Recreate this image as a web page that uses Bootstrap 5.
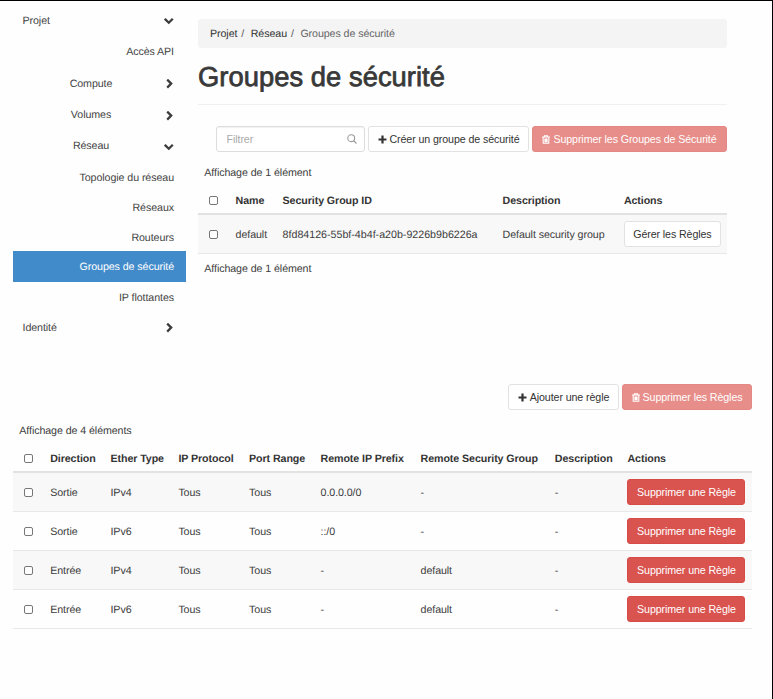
<!DOCTYPE html>
<html lang="fr">
<head>
<meta charset="utf-8">
<title>Groupes de sécurité</title>
<meta name="viewport" content="width=device-width, initial-scale=1">
<link href="https://cdn.jsdelivr.net/npm/bootstrap@5.3.0/dist/css/bootstrap.min.css" rel="stylesheet">
<style>
body{font-family:"Liberation Sans",Arial,sans-serif;font-size:10.67px;line-height:15px;letter-spacing:-.08px;text-rendering:geometricPrecision;color:#3c3c3c;background:#fff;overflow:hidden}
.frame{width:773px;height:699px;border-top:1px solid #000;border-right:1px solid #000;background:#fefefe;white-space:nowrap;overflow:hidden}
.upper{height:383px;padding-left:13px}
.side{width:173px;padding-top:4px}
.side .nav-link{color:#444;height:30px;padding:2px 12px 0 9.5px;font-size:inherit}
.side .tall{height:31.45px;padding-top:1px}
.side .nav-link.active{background:#428bca;color:#fff;height:31px;margin-top:-1px;border-radius:0}
.side .mid{width:100px;margin-left:18.5px;text-align:center}
.chev{width:10px;height:10px;fill:none;stroke:#3c3c3c;stroke-width:2.3}
.main{width:529px;margin-left:12px;padding-top:18px}
.breadcrumb{background:#f4f4f4;height:29px;padding:2px 12px 0;border-radius:3px;font-size:inherit;--bs-breadcrumb-item-padding-x:4px}
.breadcrumb-item a{color:#333}
.breadcrumb-item+.breadcrumb-item::before{color:#555;padding-right:6.5px}
.breadcrumb-item.active{color:#666}
.title{font-size:27.35px;line-height:32px;font-weight:400;letter-spacing:.04px;color:#383838;-webkit-text-stroke:.75px #383838;margin:13px 0 11px}
.rule{height:1px;background:#f0f0f0;margin-bottom:21px}
.btn{--bs-btn-font-size:10.67px;--bs-btn-line-height:15px;--bs-btn-padding-x:0;--bs-btn-padding-y:0;--bs-btn-border-radius:3px;height:26px;display:inline-flex;align-items:center;justify-content:center;gap:3px;letter-spacing:-.1px}
.btn-plain{--bs-btn-bg:#fff;--bs-btn-color:#333;--bs-btn-border-color:#e2e2e2;--bs-btn-hover-bg:#f4f4f4}
.btn-danger{--bs-btn-bg:#d9534f;--bs-btn-border-color:#d74b47;--bs-btn-disabled-bg:#e78e8a;--bs-btn-disabled-border-color:#e58783;--bs-btn-disabled-opacity:1}
.actions{gap:3px}
.filter{width:149.5px}
.filter .form-control{height:26px;font-size:inherit;letter-spacing:inherit;padding:0 10px;border:1px solid #ddd;border-radius:3px;background:#fff;box-shadow:inset 0 1px 1px rgba(0,0,0,.06)}
.filter .form-control::placeholder{color:#aaa}
.filter svg{position:absolute;right:8px;top:8px;z-index:5}
.note{padding-left:6.3px}
.table{--bs-table-color:#3c3c3c;--bs-table-bg:transparent;--bs-table-striped-color:#3c3c3c;--bs-table-striped-bg:#f8f8f8;--bs-table-border-color:#e8e8e8;table-layout:fixed;border-collapse:separate;border-spacing:0;color:#3c3c3c}
.table>:not(caption)>*>*{padding:0 6.2px}
.table>thead>tr>th{height:28px;border-bottom:2px solid #e2e2e2;font-weight:700;color:#333;vertical-align:middle;padding-top:2px}
.table>thead>tr>th:first-child{padding-top:0;padding-bottom:1px}
.table td{height:39px;border-bottom:1px solid #e8e8e8}
.table>tbody>tr>td:not(:first-child):not(:last-child){padding-top:2px}
.table .uuid{letter-spacing:0}
.form-check-input{width:9px;height:9px;border:1px solid #777;margin:1px 0 0 4.4px;border-radius:2px!important;display:block;float:none;background:#fff}
.lower{padding-left:13px;width:752px}
.w1{width:31.4px}
#create{width:161px}
#delgroups{width:195px}
#manage{width:97px}
#addrule{width:111px}
#delrules{width:130px}
.delrule{width:118px}
#n1{margin-top:14px;margin-bottom:6px}
#n2{margin-top:8px}
#n3{margin-top:14px;margin-bottom:6px}
</style>
<script src="https://cdn.jsdelivr.net/npm/bootstrap@5.3.0/dist/js/bootstrap.bundle.min.js"></script>
</head>
<body>
<svg width="0" height="0" class="position-absolute">
<symbol id="down" viewBox="0 0 10 10"><path d="M.8 2.8 4.8 6.7 8.8 2.8"/></symbol>
<symbol id="right" viewBox="0 0 10 10"><path d="M3.2 .6 7.2 4.6 3.2 8.6"/></symbol>
<symbol id="plus" viewBox="0 0 9 9"><path d="M4.5.5v8M.5 4.5h8" stroke="currentColor" stroke-width="2.2"/></symbol>
<symbol id="trash" viewBox="0 0 8 9"><path d="M0 2h8M2.5 1.8V.7h3v1.1M1.2 2v6.3h5.6V2M3 3.6v3.6M4 3.6v3.6M5 3.6v3.6" fill="none" stroke="currentColor" stroke-width="1.1"/></symbol>
</svg>
<div class="frame">
<div class="upper d-flex">
<nav class="side nav flex-column flex-nowrap flex-shrink-0">
<a class="nav-link tall d-flex align-items-center justify-content-between" href="#">Projet<svg class="chev"><use href="#down"/></svg></a>
<a class="nav-link tall d-flex align-items-center justify-content-end" href="#">Accès API</a>
<a class="nav-link tall d-flex align-items-center justify-content-between" href="#"><span class="mid">Compute</span><svg class="chev"><use href="#right"/></svg></a>
<a class="nav-link tall d-flex align-items-center justify-content-between" href="#"><span class="mid">Volumes</span><svg class="chev"><use href="#right"/></svg></a>
<a class="nav-link tall d-flex align-items-center justify-content-between" href="#"><span class="mid">Réseau</span><svg class="chev"><use href="#down"/></svg></a>
<a class="nav-link d-flex align-items-center justify-content-end" href="#">Topologie du réseau</a>
<a class="nav-link d-flex align-items-center justify-content-end" href="#">Réseaux</a>
<a class="nav-link d-flex align-items-center justify-content-end" href="#">Routeurs</a>
<a class="nav-link active d-flex align-items-center justify-content-end" href="#">Groupes de sécurité</a>
<a class="nav-link d-flex align-items-center justify-content-end" href="#">IP flottantes</a>
<a class="nav-link tall d-flex align-items-center justify-content-between" href="#">Identité<svg class="chev"><use href="#right"/></svg></a>
</nav>
<main class="main flex-shrink-0">
<ol class="breadcrumb d-flex align-items-center mb-0">
<li class="breadcrumb-item"><a class="text-decoration-none" href="#">Projet</a></li>
<li class="breadcrumb-item"><a class="text-decoration-none" href="#">Réseau</a></li>
<li class="breadcrumb-item active">Groupes de sécurité</li>
</ol>
<h1 class="title">Groupes de sécurité</h1>
<div class="rule"></div>
<div class="actions d-flex justify-content-end">
<div class="filter position-relative"><input class="form-control" placeholder="Filtrer" aria-label="Filtrer"><svg width="10" height="10" viewBox="0 0 10 10" fill="none" stroke="#999" stroke-width="1.1"><circle cx="4.2" cy="4.2" r="3.4"/><path d="m6.7 6.7 2.8 2.8"/></svg></div>
<button class="btn btn-plain" id="create"><svg width="9" height="9"><use href="#plus"/></svg>Créer un groupe de sécurité</button>
<button class="btn btn-danger" id="delgroups" disabled><svg width="8" height="9"><use href="#trash"/></svg>Supprimer les Groupes de Sécurité</button>
</div>
<div class="note" id="n1">Affichage de 1 élément</div>
<table class="table table-striped align-middle mb-0" id="groups">
<colgroup><col class="w1"><col style="width:47px"><col style="width:220px"><col style="width:121.3px"><col></colgroup>
<thead><tr><th><input type="checkbox" class="form-check-input"></th><th>Name</th><th>Security Group ID</th><th>Description</th><th>Actions</th></tr></thead>
<tbody><tr><td><input type="checkbox" class="form-check-input"></td><td>default</td><td class="uuid">8fd84126-55bf-4b4f-a20b-9226b9b6226a</td><td>Default security group</td><td><button class="btn btn-plain" id="manage">Gérer les Règles</button></td></tr></tbody>
</table>
<div class="note" id="n2">Affichage de 1 élément</div>
</main>
</div>
<section class="lower">
<div class="actions d-flex justify-content-end">
<button class="btn btn-plain" id="addrule"><svg width="9" height="9"><use href="#plus"/></svg>Ajouter une règle</button>
<button class="btn btn-danger" id="delrules" disabled><svg width="8" height="9"><use href="#trash"/></svg>Supprimer les Règles</button>
</div>
<div class="note" id="n3">Affichage de 4 éléments</div>
<table class="table table-striped align-middle mb-0" id="rules">
<colgroup><col style="width:31px"><col style="width:60.3px"><col style="width:67.9px"><col style="width:70.7px"><col style="width:71.5px"><col style="width:100px"><col style="width:134.3px"><col style="width:72.6px"><col></colgroup>
<thead><tr><th><input type="checkbox" class="form-check-input"></th><th>Direction</th><th>Ether Type</th><th>IP Protocol</th><th>Port Range</th><th>Remote IP Prefix</th><th>Remote Security Group</th><th>Description</th><th>Actions</th></tr></thead>
<tbody>
<tr><td><input type="checkbox" class="form-check-input"></td><td>Sortie</td><td>IPv4</td><td>Tous</td><td>Tous</td><td>0.0.0.0/0</td><td>-</td><td>-</td><td><button class="btn btn-danger delrule">Supprimer une Règle</button></td></tr>
<tr><td><input type="checkbox" class="form-check-input"></td><td>Sortie</td><td>IPv6</td><td>Tous</td><td>Tous</td><td>::/0</td><td>-</td><td>-</td><td><button class="btn btn-danger delrule">Supprimer une Règle</button></td></tr>
<tr><td><input type="checkbox" class="form-check-input"></td><td>Entrée</td><td>IPv4</td><td>Tous</td><td>Tous</td><td>-</td><td>default</td><td>-</td><td><button class="btn btn-danger delrule">Supprimer une Règle</button></td></tr>
<tr><td><input type="checkbox" class="form-check-input"></td><td>Entrée</td><td>IPv6</td><td>Tous</td><td>Tous</td><td>-</td><td>default</td><td>-</td><td><button class="btn btn-danger delrule">Supprimer une Règle</button></td></tr>
</tbody>
</table>
</section>
</div>
</body>
</html>
